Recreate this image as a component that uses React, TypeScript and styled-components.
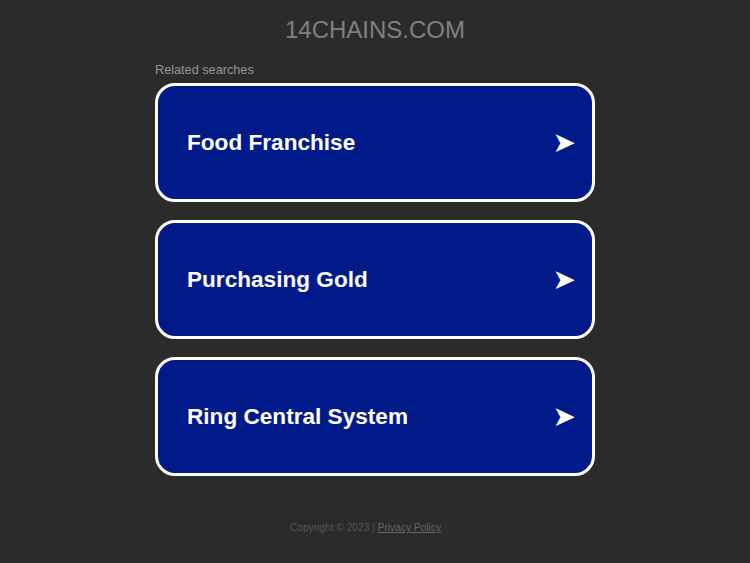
import React from "react";
import styled, { createGlobalStyle } from "styled-components";

const Global = createGlobalStyle`
  html, body { margin: 0; padding: 0; background: #2b2b2b; }
  body { font-family: "Liberation Sans", Arial, sans-serif; }
`;

const Page = styled.div`
  width: 750px;
  min-height: 563px;
  display: flex;
  flex-direction: column;
  align-items: center;
`;

const Title = styled.h1`
  margin: 16px 0 0;
  font-size: 24px;
  font-weight: normal;
  color: #808080;
  line-height: 28px;
`;

const Section = styled.div`
  width: 440px;
  margin-top: 18px;
  display: flex;
  flex-direction: column;
`;

const Label = styled.div`
  font-size: 12.7px;
  color: #959595;
  line-height: 16px;
  margin-bottom: 5px;
`;

const List = styled.div`
  display: flex;
  flex-direction: column;
  gap: 18px;
`;

const Card = styled.a`
  box-sizing: border-box;
  height: 119px;
  border: 3px solid #ffffff;
  border-radius: 20px;
  background: #011a8a;
  display: flex;
  align-items: center;
  justify-content: space-between;
  padding: 1px 16px 0 29px;
  text-decoration: none;
  color: #ffffff;
`;

const CardText = styled.span`
  font-size: 22.6px;
  font-weight: bold;
`;

const Arrow = styled.span`
  font-family: "DejaVu Sans", sans-serif;
  font-size: 28px;
  line-height: 1;
  color: #ffffff;
`;

const Footer = styled.div`
  margin-top: 46px;
  padding-right: 19px;
  font-size: 10.2px;
  color: #555555;
`;

const FooterLink = styled.a`
  color: #666666;
  text-decoration: underline;
`;

const items = ["Food Franchise", "Purchasing Gold", "Ring Central System"];

export default function App() {
  return (
    <Page>
      <Global />
      <Title>14CHAINS.COM</Title>
      <Section>
        <Label>Related searches</Label>
        <List>
          {items.map((t) => (
            <Card key={t} href="#">
              <CardText>{t}</CardText>
              <Arrow>➤</Arrow>
            </Card>
          ))}
        </List>
      </Section>
      <Footer>
        Copyright © 2023 | <FooterLink href="#">Privacy Policy</FooterLink>
      </Footer>
    </Page>
  );
}
